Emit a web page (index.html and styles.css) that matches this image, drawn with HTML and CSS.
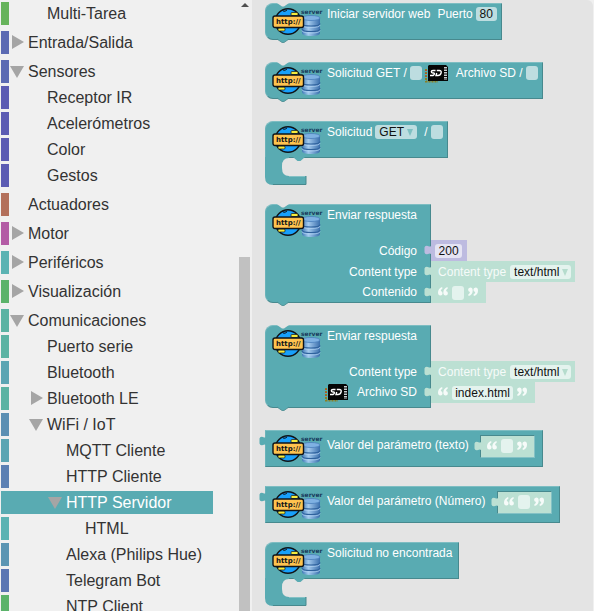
FILE: index.html
```html
<!DOCTYPE html>
<html lang="es">
<head>
<meta charset="utf-8">
<meta name="viewport" content="width=device-width, initial-scale=1">
<title>Bloques</title>
<link rel="stylesheet" href="styles.css">
</head>
<body>
<svg class="defs" aria-hidden="true">
  <defs>
    <linearGradient id="disk" x1="0" x2="1" y1="0" y2="0">
      <stop offset="0" stop-color="#3f78b6"/><stop offset=".35" stop-color="#a3caee"/><stop offset="1" stop-color="#3a6fad"/>
    </linearGradient>
    <symbol id="http" viewBox="0 0 50 32">
      <path d="M30 13v15q0 3 9 3t9-3V13z" fill="url(#disk)"/>
      <ellipse cx="39" cy="13" rx="9" ry="2.500" fill="#7fb1e2" stroke="#4a80bd" stroke-width=".8"/>
      <path d="M30 18.500q0 2.500 9 2.500t9-2.500M30 24q0 2.500 9 2.500t9-2.500" fill="none" stroke="#2f629d" stroke-width="1.200"/>
      <path d="M30 20q0 2.500 9 2.500t9-2.500M30 25.500q0 2.500 9 2.500t9-2.500" fill="none" stroke="#b4d6f5" stroke-width=".7"/>
      <circle cx="16" cy="16.500" r="12.700" fill="#18a0fb" stroke="#101418" stroke-width="1.500"/>
      <path d="M11 6q2 1 4-1" fill="none" stroke="#101418" stroke-width="1"/>
      <rect x="19" y="7.500" width="7" height="3" rx="1" fill="#f5ec3c" stroke="#101418" stroke-width=".7"/>
      <rect x="6" y="23" width="7" height="3" rx="1" fill="#f5ec3c" stroke="#101418" stroke-width=".7"/>
      <rect x="1" y="11" width="30.500" height="11.500" rx="2" fill="#ffc34f" stroke="#101418" stroke-width="1.400"/>
      <text x="4" y="19" class="icon-http">http://</text>
      <text x="29" y="9" class="icon-server">server</text>
    </symbol>
    <symbol id="sd" viewBox="0 0 24 19">
      <path d="M1 5v12.500h12" fill="none" stroke="#8c7f22" stroke-width="2" stroke-dasharray="2 1"/>
      <path d="M1 6v7" stroke="#c4402c" stroke-width="1.500" stroke-dasharray="1 2"/>
      <path d="M4 1h17l2 2v14H3V2z" fill="#050505"/>
      <path d="M20.500 3v13" stroke="#c9cdd0" stroke-width="3" stroke-dasharray="1.500 1"/>
      <path d="M10.500 6.500H8Q6.300 6.600 6.300 7.700T7.800 9h.7q1.200.2.800 1.200T8 11.500H5M11.800 6.500h2.400q2.600 0 1.900 2.500T13 11.500h-2l.7-2.500" fill="none" stroke="#fff" stroke-width="1.400"/>
    </symbol>
    <symbol id="quote-open" viewBox="0 0 10 9">
      <path id="q" d="M4 0Q0 1.500 0 5.600 0 8.600 2.400 8.600 4.600 8.500 4.600 6.300 4.600 4.400 2.700 4 3 2.300 4.600 1.200z" fill="#f6fbf9"/>
      <use href="#q" x="5.300"/>
    </symbol>
    <symbol id="quote-close" viewBox="0 0 10 9"><use href="#quote-open" width="10" height="9" transform="rotate(180 5 4.500)"/></symbol>
    <symbol id="closed" viewBox="0 0 19 23"><path d="M3 4l12 7-12 7z" fill="#a5a5a5"/></symbol>
    <symbol id="open" viewBox="0 0 19 23"><path d="M1 6h14l-7 12z" fill="#a5a5a5"/></symbol>
    <symbol id="notch" viewBox="0 0 12 4"><path d="M0 0h12l-5 3.500H5z" fill="#e4e4e4"/></symbol>
    <symbol id="tail" viewBox="0 0 12 4"><path d="M0-1h12v1l-5 3.500H5L0 0z" fill="#59abb2"/><path d="M0 0l5 3.500h2L12 0" fill="none" stroke="#47898e" stroke-width=".8"/></symbol>
    <symbol id="plug" viewBox="0 0 7 12"><path d="M7 0v2q-1 1-3 0-3-1-3.500 1.500v5Q1 11 4 10q2-1 3 0v2z" fill="currentColor"/></symbol>
    <symbol id="mouth" viewBox="0 0 41 28">
      <path d="M0 0h24v1q-7 0-7 8v2q0 8 7 8h17v9H8q-8 0-8-8zM28 0h12l-4.500 4h-3z" fill="#59abb2"/>
      <path d="M41 19v8.500H8" fill="none" stroke="#47898e"/>
      <path d="M24 19.500h16" stroke="#84c1c5" fill="none"/>
    </symbol>
  </defs>
</svg>

<div class="app">
  <nav class="sidebar" aria-label="Categorías">
    <ul class="tree">
      <li><ul class="first">
        <li><button class="row l2 green-a">Multi-Tarea</button></li>
      </ul></li>
      <li><button class="row l1 blue-a"><svg class="arrow"><use href="#closed"/></svg>Entrada/Salida</button></li>
      <li><button class="row l1 blue-a"><svg class="arrow"><use href="#open"/></svg>Sensores</button>
        <ul>
          <li><button class="row l2 indigo">Receptor IR</button></li>
          <li><button class="row l2 indigo">Acelerómetros</button></li>
          <li><button class="row l2 indigo">Color</button></li>
          <li><button class="row l2 indigo">Gestos</button></li>
        </ul></li>
      <li><button class="row l1 brown bare">Actuadores</button></li>
      <li><button class="row l1 magenta"><svg class="arrow"><use href="#closed"/></svg>Motor</button></li>
      <li><button class="row l1 cyan"><svg class="arrow"><use href="#closed"/></svg>Periféricos</button></li>
      <li><button class="row l1 green-b"><svg class="arrow"><use href="#closed"/></svg>Visualización</button></li>
      <li><button class="row l1 jade"><svg class="arrow"><use href="#open"/></svg>Comunicaciones</button>
        <ul>
          <li><button class="row l2 jade">Puerto serie</button></li>
          <li><button class="row l2 aqua">Bluetooth</button></li>
          <li><button class="row l2 jade has-arrow"><svg class="arrow"><use href="#closed"/></svg>Bluetooth LE</button></li>
          <li><button class="row l2 steel has-arrow"><svg class="arrow"><use href="#open"/></svg>WiFi / IoT</button>
            <ul>
              <li><button class="row l3 aqua">MQTT Cliente</button></li>
              <li><button class="row l3 blue-b">HTTP Cliente</button></li>
              <li><button class="row l3 selected has-arrow"><svg class="arrow"><use href="#open"/></svg>HTTP Servidor</button>
                <ul><li><button class="row l4 cyan">HTML</button></li></ul></li>
              <li><button class="row l3 sky">Alexa (Philips Hue)</button></li>
              <li><button class="row l3 blue-c">Telegram Bot</button></li>
              <li><button class="row l3 green-b">NTP Client</button></li>
            </ul></li>
        </ul></li>
    </ul>
    <div class="scrollbar" aria-hidden="true"><span class="up"></span><span class="thumb"></span></div>
  </nav>

  <main class="flyout">
    <section class="block tailed">
      <div class="body">
        <svg class="notch"><use href="#notch"/></svg><svg class="tail"><use href="#tail"/></svg>
        <svg class="http"><use href="#http"/></svg>
        <div class="fields"><span>Iniciar servidor web</span><label class="after" for="port">Puerto</label><input id="port" class="field w21" value="80"></div>
      </div>
    </section>

    <section class="block tailed">
      <div class="body">
        <svg class="notch"><use href="#notch"/></svg><svg class="tail"><use href="#tail"/></svg>
        <svg class="http"><use href="#http"/></svg>
        <div class="fields"><label for="get">Solicitud GET /</label><input id="get" class="field w12"><svg class="sd"><use href="#sd"/></svg><label class="after" for="file">Archivo SD /</label><input id="file" class="field w12"></div>
      </div>
    </section>

    <section class="block">
      <div class="body open-bottom">
        <svg class="http"><use href="#http"/></svg>
        <div class="fields"><label for="method">Solicitud</label><span class="pick"><select id="method" class="field w42"><option>GET</option></select></span><label class="after" for="path">/</label><input id="path" class="field w12"></div>
      </div>
      <svg class="mouth"><use href="#mouth"/></svg>
    </section>

    <section class="block tailed split">
      <div class="body tall">
        <svg class="notch"><use href="#notch"/></svg><svg class="tail"><use href="#tail"/></svg>
        <div class="head"><svg class="http"><use href="#http"/></svg><div class="fields">Enviar respuesta</div></div>
        <label class="slot" for="code">Código</label>
        <label class="slot" for="type1">Content type</label>
        <label class="slot" for="content">Contenido</label>
      </div>
      <div class="values">
        <div class="value number"><svg class="plug"><use href="#plug"/></svg><input id="code" class="field w27" value="200"></div>
        <div class="value"><svg class="plug"><use href="#plug"/></svg><label for="type1">Content type</label><span class="pick"><select id="type1" class="field w61"><option>text/html</option></select></span></div>
        <div class="value quoted"><svg class="plug"><use href="#plug"/></svg><svg class="quote"><use href="#quote-open"/></svg><input id="content" class="field w12"><svg class="quote"><use href="#quote-close"/></svg></div>
      </div>
    </section>

    <section class="block tailed split">
      <div class="body tall">
        <svg class="notch"><use href="#notch"/></svg><svg class="tail"><use href="#tail"/></svg>
        <div class="head"><svg class="http"><use href="#http"/></svg><div class="fields">Enviar respuesta</div></div>
        <label class="slot" for="type2">Content type</label>
        <label class="slot with-image" for="index"><svg class="sd"><use href="#sd"/></svg>Archivo SD</label>
      </div>
      <div class="values">
        <div class="value"><svg class="plug"><use href="#plug"/></svg><label for="type2">Content type</label><span class="pick"><select id="type2" class="field w61"><option>text/html</option></select></span></div>
        <div class="value quoted"><svg class="plug"><use href="#plug"/></svg><svg class="quote"><use href="#quote-open"/></svg><input id="index" class="field w61" value="index.html"><svg class="quote"><use href="#quote-close"/></svg></div>
      </div>
    </section>

    <section class="block output">
      <div class="body">
        <svg class="plug"><use href="#plug"/></svg>
        <svg class="http"><use href="#http"/></svg>
        <div class="fields"><label for="text">Valor del parámetro (texto)</label><div class="value quoted inset"><svg class="plug"><use href="#plug"/></svg><svg class="quote"><use href="#quote-open"/></svg><input id="text" class="field w12"><svg class="quote"><use href="#quote-close"/></svg></div></div>
      </div>
    </section>

    <section class="block output">
      <div class="body">
        <svg class="plug"><use href="#plug"/></svg>
        <svg class="http"><use href="#http"/></svg>
        <div class="fields"><label for="num">Valor del parámetro (Número)</label><div class="value quoted inset"><svg class="plug"><use href="#plug"/></svg><svg class="quote"><use href="#quote-open"/></svg><input id="num" class="field w12"><svg class="quote"><use href="#quote-close"/></svg></div></div>
      </div>
    </section>

    <section class="block">
      <div class="body open-bottom">
        <svg class="http"><use href="#http"/></svg>
        <div class="fields wide">Solicitud no encontrada</div>
      </div>
      <svg class="mouth"><use href="#mouth"/></svg>
    </section>
  </main>
</div>
</body>
</html>
```
FILE: styles.css
```css
* { box-sizing: border-box; }

body {
  margin: 0;
  background: #f0f0f0;
  font-family: "Liberation Sans", Arial, sans-serif;
}

svg { display: block; flex: none; overflow: visible; }
symbol { overflow: visible; }
.defs { position: absolute; width: 0; height: 0; }

.app { display: flex; height: 100vh; overflow: hidden; }

/* Category tree */
.sidebar { display: flex; flex: none; justify-content: space-between; width: 252px; padding: 0 2px 0 1px; }
ul { list-style: none; margin: 3px 0 0; padding: 0; display: flex; flex-direction: column; gap: 3px; }
.tree { width: 212px; margin-top: 2px; gap: 6px; }
.first { margin-top: 0; }

.row {
  --ink: #333;
  display: flex;
  align-items: center;
  width: 100%;
  height: 23px;
  padding: 0;
  border: 0;
  border-left: 8px solid var(--bar);
  background: none;
  font: 16px/23px "Liberation Sans", Arial, sans-serif;
  color: var(--ink);
  white-space: nowrap;
}
.arrow { width: 19px; height: 23px; }
.l1.bare { padding-left: 19px; }
.l2 { padding-left: 38px; }
.l3 { padding-left: 57px; }
.l4 { padding-left: 76px; }
.l2.has-arrow { padding-left: 19px; }
.l3.has-arrow { padding-left: 38px; }
.selected { --ink: #fff; --bar: #59abb2; background: #59abb2; }

.green-a { --bar: #66b35b; }
.green-b { --bar: #5bb36a; }
.blue-a { --bar: #5b6ab3; }
.blue-b { --bar: #5b80b3; }
.blue-c { --bar: #5b76b3; }
.indigo { --bar: #5b5bb3; }
.brown { --bar: #b3705b; }
.magenta { --bar: #b35ba5; }
.cyan { --bar: #5bb3b3; }
.jade { --bar: #5bb3a3; }
.aqua { --bar: #5ba5b3; }
.steel { --bar: #5b8fb3; }
.sky { --bar: #5b95b3; }

.scrollbar { display: flex; flex-direction: column; align-items: center; justify-content: space-between; width: 11px; padding-top: 3px; }
.up { border: 4px solid transparent; border-top: 0; border-bottom-color: #505050; }
.thumb { width: 11px; height: 58vh; background: #c1c1c1; }

/* Block flyout */
.flyout {
  flex: 1;
  display: flex;
  flex-direction: column;
  align-items: flex-start;
  gap: 19px;
  margin-right: 1px;
  padding: 3px 0 0 13px;
  border-top-right-radius: 6px;
  background: #e4e4e4;
  font-size: 12px;
  color: #fff;
  white-space: nowrap;
}
.block { flex: none; }
.tailed { margin-bottom: 3px; }
.split { display: flex; }

.body {
  position: relative;
  display: flex;
  align-items: center;
  gap: 5px;
  width: fit-content;
  height: 37px;
  padding: 0 4px 0 6px;
  border: 1px solid;
  border-color: #7dbdc2 #47898e #47898e #6ab3b9;
  border-radius: 8px 0 0 8px;
  background: #59abb2;
}
.open-bottom { border-bottom-left-radius: 0; }
.tall { flex-direction: column; align-items: stretch; gap: 0; height: auto; padding: 0 13px 0 6px; }
.head { display: flex; align-items: center; gap: 5px; height: 35px; }
.slot { display: flex; align-items: center; justify-content: flex-end; height: 21px; }
.slot:last-child { height: 20px; }
.tall .slot.with-image { gap: 8px; height: 25px; padding-bottom: 5px; }

.http { width: 50px; height: 32px; margin-bottom: 2px; }
.icon-http { font: bold 7px "DejaVu Sans", sans-serif; fill: #101418; }
.icon-server { font: bold 6px "DejaVu Sans", sans-serif; fill: #17395c; }
.sd { width: 24px; height: 19px; }

.fields { display: flex; align-items: center; align-self: flex-start; gap: 3px; height: 20px; }
.fields .after { margin-left: 4px; }
.fields.wide { padding-right: 2px; }

.notch, .tail { position: absolute; left: 11px; width: 12px; height: 4px; }
.notch { top: -1px; }
.tail { bottom: -4px; }
.mouth { width: 41px; height: 28px; margin-top: -1px; position: relative; }

.field {
  appearance: none;
  height: 14px;
  margin: 0;
  padding: 0;
  border: 0;
  border-radius: 3px;
  background: #bddde0;
  font: 12px/14px "Liberation Sans", Arial, sans-serif;
  color: #111;
  text-align: center;
}
select.field { display: block; padding-left: 4px; text-align: left; }
.w12 { width: 12px; }
.w21 { width: 21px; }
.w27 { width: 27px; }
.w42 { width: 42px; }
.w61 { width: 61px; }

.pick { position: relative; }
.pick::after {
  content: "";
  position: absolute;
  right: 4px;
  top: 4px;
  border: 3px solid transparent;
  border-top: 7px solid #7fc0c2;
  border-bottom: 0;
  pointer-events: none;
}

/* Value blocks plugged into an input */
.values { padding-top: 36px; }
.value {
  --plug: #bce0d3;
  position: relative;
  display: flex;
  align-items: center;
  gap: 4px;
  width: fit-content;
  height: 21px;
  padding: 0 4px 0 7px;
  background: var(--plug);
  color: #f6fbf9;
}
.value .field { background: #e4f3ee; }
.value .pick::after { right: 3px; border-top-color: #b5dccd; }
.number { --plug: #bdbbe0; padding: 0 5px 0 4px; }
.number .field { background: #e5e4f3; }
.quoted { padding: 0 8px 0 7px; }
.quote { width: 10px; height: 9px; margin-bottom: 2px; }

.plug { position: absolute; right: 100%; top: 4px; width: 7px; height: 12px; color: #59abb2; }
.value .plug { color: var(--plug); }

.output .body { padding-right: 7px; border-radius: 0; }
.output .fields { height: 28px; gap: 11px; }
.inset { height: 23px; margin-top: 2px; border: 1px solid; border-color: #47898e #84c1c5 #84c1c5 #47898e; }
.inset.quoted { padding: 0 7px 0 6px; }
```
